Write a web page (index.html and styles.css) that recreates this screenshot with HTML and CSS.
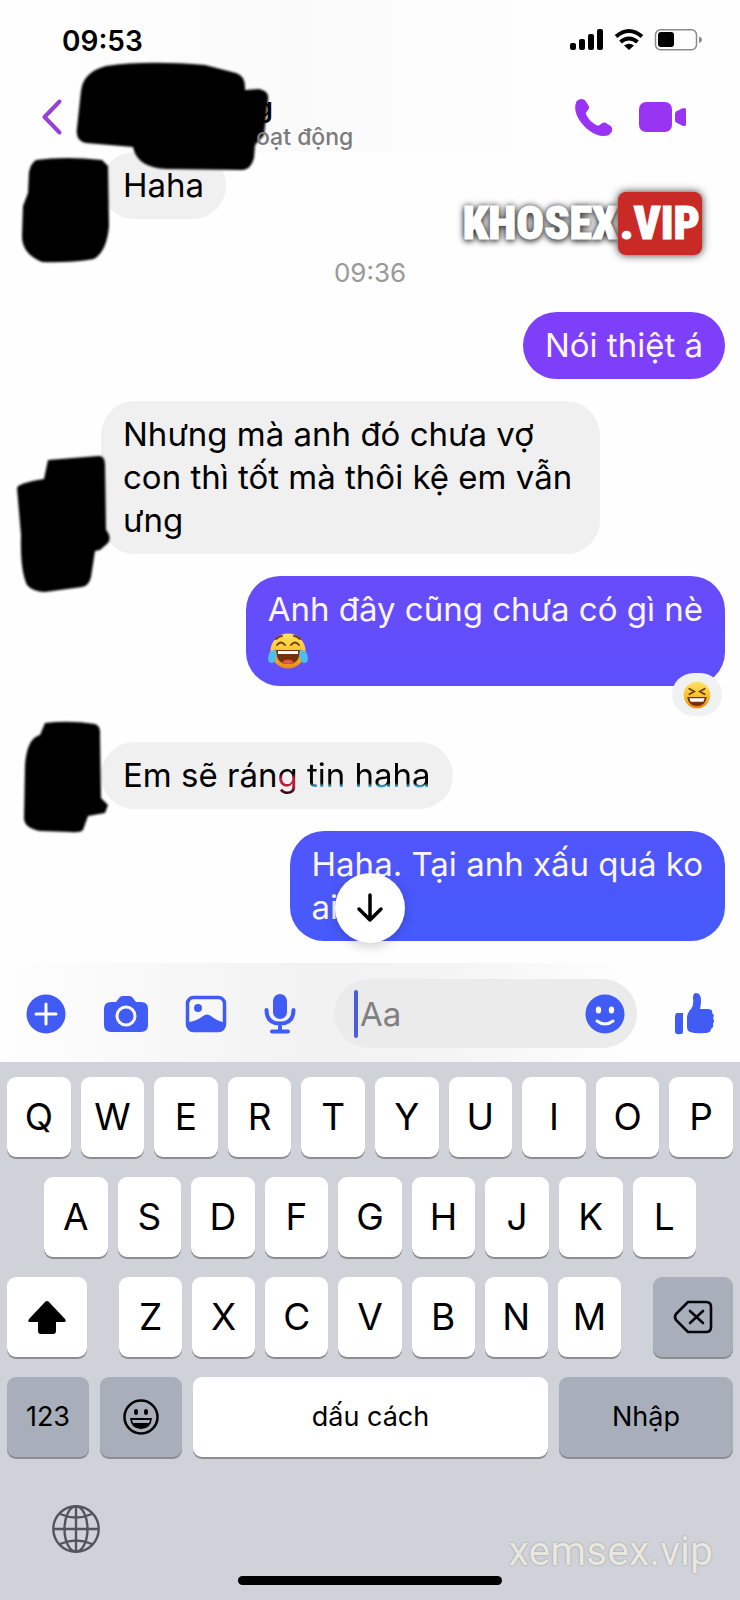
FILE: index.html
```html
<!DOCTYPE html>
<html lang="vi">
<head>
<meta charset="utf-8">
<meta name="viewport" content="width=device-width, initial-scale=1">
<title>Messenger</title>
<link rel="stylesheet" href="styles.css">
</head>
<body>
<div class="phone">
  <div class="top">
    <div class="status">
      <time class="clock">09:53</time>
      <svg class="status-icons" viewBox="0 0 132 22" width="132" height="22" aria-hidden="true">
        <rect x="0" y="14" width="6" height="7" rx="2"/><rect x="9" y="10" width="6" height="11" rx="2"/><rect x="18" y="5" width="6" height="16" rx="2"/><rect x="27" y="0" width="6" height="21" rx="2"/>
        <g fill="none" stroke="#000" stroke-width="4"><path d="M46 7.500Q59-3.500 72 7.500"/><path d="M50.500 13Q59 6 67.500 13"/></g>
        <path d="M54 16.500q5-3.500 10 0l-5 4.500z"/>
        <rect x="85.500" y="0.700" width="41" height="20" rx="5" fill="none" stroke="#8a8a8a" stroke-width="1.500"/><rect x="88" y="3" width="16" height="15" rx="3"/><path d="M129 7.500q3 1 3 3.300t-3 3.200z" fill="#888"/>
      </svg>
    </div>
    <header class="header">
      <button class="icon-btn back" aria-label="Quay lại"><svg viewBox="0 0 20 36" width="20" height="36"><path d="M17.500 2.500L2.500 18l15 15.500" fill="none" stroke="#9540d6" stroke-width="4" stroke-linecap="round" stroke-linejoin="round"/></svg></button>
      <div class="who"><strong>g</strong><span>oạt động</span></div>
      <button class="icon-btn" aria-label="Gọi"><svg viewBox="618 294 116 118" width="38" height="39"><path fill="#9a34f5" d="M622 305C630 294 645 294 651 304L660 318C664 327 654 332 651 341C657 357 670 371 688 378C697 377 700 365 711 369L728 380C736 389 730 402 719 408C700 412 680 408 660 392C635 372 615 343 619 315Z"/></svg></button>
      <button class="icon-btn video" aria-label="Gọi video"><svg viewBox="0 0 47 30" width="47" height="30"><g fill="#9a34f5"><rect width="33" height="30" rx="7"/><path d="M36 12q0-1.500 1-2.500l6-3q4-1.500 4 1v15q0 2.500-4 1l-6-3q-1-1-1-2.500z"/></g></svg></button>
      <svg class="scribble name-mask" viewBox="0 0 200 116" width="200" height="116" aria-hidden="true"><path d="M35 6Q75 0 134 5L165 13Q175 16 174 30L188 29Q199 31 197 40L193 75L184 85L183 98Q180 109 172 110L96 109Q66 108 62 87L15 83Q4 81 6 68L10 31Q12 12 35 6Z"/></svg>
    </header>
  </div>

  <main class="chat">
    <div class="row">
      <div class="avatar"><svg class="scribble" viewBox="0 0 101 120" width="101" height="120"><path transform="translate(0 4)" d="M36 4Q65 0 102 4L108 10L109 70Q107 95 94 103Q70 107 42 106Q22 98 22 80L23 50L28 37L29 16Q31 7 36 4Z"/></svg></div>
      <p class="bubble">Haha</p>
    </div>
    <time class="stamp">09:36</time>
    <div class="row mine"><p class="bubble violet">Nói thiệt á</p></div>
    <div class="row">
      <div class="avatar"><svg class="scribble" viewBox="0 0 101 153" width="101" height="153"><path transform="translate(0 54)" d="M48 5L98 1Q105 0 105 10L106 75Q112 82 108 88L100 95L95 96L91 122Q89 131 82 132L45 137Q33 137 27 130Q20 115 21 80L17 33Q18 28 44 24Z"/></svg></div>
      <p class="bubble">Nhưng mà anh đó chưa vợ con thì tốt mà thôi kệ em vẫn ưng</p>
    </div>
    <div class="row mine">
      <div class="bubble indigo">Anh đây cũng chưa có gì nè<br><svg class="emoji" viewBox="0 0 40 40" width="40" height="40" role="img" aria-label="Cười ra nước mắt"><circle cx="20" cy="20" r="17.500" fill="url(#face)"/><path d="M9 14q4-5 8 0M23 14q4-5 8 0M8 8q3-3 6-3M26 5q3 0 6 3" fill="none" stroke="#72400b" stroke-width="2" stroke-linecap="round"/><path d="M8 19h24q0 14-12 14T8 19z" fill="#73320b"/><path d="M10 20h20v3H10z" fill="#fff"/><path d="M14 31q6-5 12 0-6 4-12 0z" fill="#e65750"/><path d="M8 18q-8 2-8 10 0 4 4 4 6-1 4-14zM32 18q8 2 8 10 0 4-4 4-6-1-4-14z" fill="#51bde8"/></svg>
        <span class="reaction"><svg viewBox="0 0 40 40" width="28" height="28" role="img" aria-label="Haha"><defs><linearGradient id="face" x2="0" y2="1"><stop stop-color="#ffe35e"/><stop offset=".6" stop-color="#f8bd27"/><stop offset="1" stop-color="#e98718"/></linearGradient></defs><circle cx="20" cy="20" r="19" fill="url(#face)"/><path d="M9 11l7 4-7 4M31 11l-7 4 7 4" fill="none" stroke="#6b3c0b" stroke-width="2.500" stroke-linecap="round"/><path d="M6 23h28q-2 13-14 13T6 23z" fill="#73320b"/><path d="M9 24.500h22l-2 5H11z" fill="#fff"/></svg></span>
      </div>
    </div>
    <div class="row after-reaction">
      <div class="avatar"><svg class="scribble" viewBox="0 0 101 100" width="101" height="100"><path transform="translate(0 -22)" d="M45 3Q70 0 95 4Q101 6 100 15L101 78L108 85L105 93L88 96L83 110Q80 113 70 112L40 111Q24 108 24 98L25 45Q27 18 40 15Z"/></svg></div>
      <p class="bubble">Em sẽ rán<span class="tint-red">g</span> <span class="tint-blue">tin haha</span></p>
    </div>
    <div class="row mine"><p class="bubble blue">Haha. Tại anh xấu quá ko<br>ai</p></div>
    <button class="to-end" aria-label="Xuống cuối"><svg viewBox="0 0 28 30" width="28" height="30"><path d="M14 2v25M3 16l11 11 11-11" fill="none" stroke="#000" stroke-width="3.500" stroke-linecap="round" stroke-linejoin="round"/></svg></button>
    <div class="brand"><span>KHOSEX</span><b>.VIP</b></div>
  </main>

  <form class="composer">
    <button type="button" class="icon-btn" aria-label="Thêm"><svg viewBox="0 0 40 40" width="40" height="40"><circle cx="20" cy="20" r="19.500" fill="#415cf4"/><path d="M20 10v20M10 20h20" stroke="#fff" stroke-width="3" stroke-linecap="round"/></svg></button>
    <button type="button" class="icon-btn" aria-label="Máy ảnh"><svg viewBox="0 0 44 36" width="44" height="36"><path fill="#415cf4" d="M7 6h5l4-5q1-1 3-1h6q2 0 3 1l4 5h5q7 0 7 7v16q0 7-7 7H7q-7 0-7-7V13q0-7 7-7z"/><circle cx="22" cy="20" r="9" fill="#415cf4" stroke="#f7f7f7" stroke-width="3"/></svg></button>
    <button type="button" class="icon-btn" aria-label="Ảnh"><svg viewBox="0 0 40 36" width="40" height="36"><rect x="1.500" y="1.500" width="37" height="33" rx="6" fill="#f7f7f7" stroke="#415cf4" stroke-width="3.500"/><circle cx="12" cy="12" r="4" fill="#415cf4"/><path d="M3 26q8-1 14-6 4-3 8 0 6 5 12 6v4q0 4-5 4H8q-5 0-5-4z" fill="#415cf4"/></svg></button>
    <button type="button" class="icon-btn" aria-label="Ghi âm"><svg viewBox="0 0 32 40" width="32" height="40"><rect x="9" y="0" width="14" height="25" rx="7" fill="#415cf4"/><path d="M2.500 16q0 13.500 13.500 13.500T29.500 16M16 30v7M8 37.500h16" fill="none" stroke="#415cf4" stroke-width="4" stroke-linecap="round"/></svg></button>
    <div class="field">
      <span class="caret"></span>
      <input type="text" placeholder="Aa" aria-label="Tin nhắn">
      <button type="button" class="icon-btn" aria-label="Biểu tượng cảm xúc"><svg viewBox="0 0 40 40" width="40" height="40"><circle cx="20" cy="20" r="19.500" fill="#415cf4"/><g fill="#fff"><ellipse cx="13.500" cy="16" rx="2.700" ry="3.500"/><ellipse cx="26.500" cy="16" rx="2.700" ry="3.500"/></g><path d="M12 27q8 6 16 0" fill="none" stroke="#fff" stroke-width="3" stroke-linecap="round"/></svg></button>
    </div>
    <button type="button" class="icon-btn" aria-label="Thích"><svg viewBox="0 0 40 42" width="40" height="42"><g fill="#415cf4"><path d="M2 20h6v19q0 2-3 2-5 1-5-3V25q0-5 2-5z"/><path d="M12 25q0-5 4-9 3-4 2-11 0-5 3-5 5 0 5 8 0 4-1 8h8q5 0 4 4 3 2 1 5 2 3 0 6 1 3-2 5 0 4-6 4-9 1-15-1-3-1-3-5z"/></g></svg></button>
  </form>

  <section class="keyboard" aria-label="Bàn phím">
    <div class="keys"><button>Q</button><button>W</button><button>E</button><button>R</button><button>T</button><button>Y</button><button>U</button><button>I</button><button>O</button><button>P</button></div>
    <div class="keys second"><button>A</button><button>S</button><button>D</button><button>F</button><button>G</button><button>H</button><button>J</button><button>K</button><button>L</button></div>
    <div class="keys third">
      <button class="side" aria-label="Shift"><svg viewBox="0 0 38 33" width="38" height="33"><path d="M17 1q2-2 4 0l16 17q2 3-1 3h-8v9q0 3-3 3H13q-3 0-3-3v-9H2q-3 0-1-3z"/></svg></button>
      <div class="keys letters"><button>Z</button><button>X</button><button>C</button><button>V</button><button>B</button><button>N</button><button>M</button></div>
      <button class="side gray" aria-label="Xóa"><svg viewBox="0 0 40 34" width="40" height="34"><path d="M15 2h18q5 0 5 5v20q0 5-5 5H15L3 20q-2-3 0-6zM17 11l13 12M30 11L17 23" fill="none" stroke="#05070c" stroke-width="2.600" stroke-linecap="round" stroke-linejoin="round"/></svg></button>
    </div>
    <div class="keys fourth">
      <button class="small gray">123</button>
      <button class="small gray" aria-label="Emoji"><svg viewBox="0 0 36 36" width="36" height="36"><circle cx="18" cy="18" r="16.500" fill="none" stroke="#000" stroke-width="2.500"/><ellipse cx="13" cy="13" rx="2" ry="3"/><ellipse cx="23" cy="13" rx="2" ry="3"/><path d="M7 19h22q-1 11-11 11T7 19z"/><path d="M9 21h18l-1 3H10z" fill="#a8afba"/></svg></button>
      <button class="space">dấu cách</button>
      <button class="enter gray">Nhập</button>
    </div>
    <div class="dock">
      <button class="icon-btn" aria-label="Ngôn ngữ"><svg viewBox="0 0 48 48" width="48" height="48"><g fill="none" stroke="#51565e" stroke-width="2.400"><circle cx="24" cy="24" r="22.700"/><ellipse cx="24" cy="24" rx="11.500" ry="22.700"/><path d="M24 1v46M1 24h46M8 9q16 7 32 0M8 39q16-7 32 0"/></g></svg></button>
      <span class="watermark">xemsex.vip</span>
    </div>
    <div class="home"></div>
  </section>
</div>
</body>
</html>
```
FILE: styles.css
```css
* { box-sizing: border-box; }
body { margin: 0; background: #fefefe; color: #000; font-family: Inter, "Noto Sans", sans-serif; }
button, input { font: inherit; color: inherit; border: 0; padding: 0; margin: 0; background: none; }
p { margin: 0; }
svg { display: block; flex: none; overflow: visible; }
.phone { display: flex; flex-direction: column; min-height: 100vh; }
.icon-btn { display: flex; align-items: center; justify-content: center; flex: none; }

.top { position: relative; z-index: 2; background: linear-gradient(90deg, #fefefe 5%, #fafafa 40%, #fefefe 75%); }
.status { height: 72px; padding: 10px 38px 0 62px; display: flex; align-items: center; justify-content: space-between; }
.clock { font-size: 28px; line-height: 32px; font-weight: 600; }
.status-icons { margin-top: -2px; }
.header { position: relative; height: 80px; padding: 10px 54px 0 42px; display: flex; align-items: center; gap: 26px; }
.who { position: relative; z-index: 2; flex: 1; padding: 10px 0 0 168px; display: flex; flex-direction: column; }
.who strong { font-size: 27px; line-height: 30px; font-weight: 600; }
.who span { color: #7b7b7b; font-size: 23px; line-height: 28px; font-weight: 500; }
.scribble { position: absolute; filter: blur(1px); }
.name-mask { left: 71px; top: -12px; z-index: 1; }

.chat { position: relative; display: flex; flex-direction: column; gap: 22px; padding: 0 15px 22px 0; font-size: 33px; line-height: 43px; }
.row { display: flex; }
.mine { justify-content: flex-end; }
.avatar { position: relative; z-index: 1; flex: none; width: 101px; }
.bubble { position: relative; max-width: 499px; padding: 12px 22px; border-radius: 34px; background: #f0f0f0; }
.mine .bubble { color: #fbf5ff; }
.mine .violet { background: #7e3ffb; }
.mine .indigo { background: linear-gradient(#684bfb, #5d50fc); }
.mine .blue { background: linear-gradient(#5055fb, #465bfc); }
.stamp { align-self: center; padding: 15px 0 0 15px; font-size: 26px; line-height: 34px; color: #999; }
.emoji { display: inline-block; vertical-align: top; }
.reaction { position: absolute; right: 3px; bottom: -30px; width: 50px; height: 43px; border-radius: 22px; background: #f0f1f3; display: flex; align-items: center; justify-content: center; }
.after-reaction { margin-top: 34px; }
.tint-red, .tint-blue { color: transparent; background-clip: text; -webkit-background-clip: text; }
.tint-red { background-image: linear-gradient(#000 45%, #c91f43 60%, #b01836 80%, #000); }
.tint-blue { background-image: linear-gradient(#000 70%, #37a7c4 78%); }
.to-end { position: absolute; left: 50%; bottom: 20px; width: 70px; height: 70px; margin-left: -35px; border-radius: 50%; background: #fff; box-shadow: 0 3px 12px #0003; display: flex; align-items: center; justify-content: center; }
.brand { position: absolute; right: 38px; top: 40px; display: flex; align-items: center; color: #fff; font: 900 46px/63px "Roboto Condensed", "Liberation Sans Narrow", "Liberation Sans", sans-serif; -webkit-text-stroke: 1px #fff; text-shadow: 0 0 7px #333, 0 2px 6px #444; }
.brand b { padding: 0 2px; border-radius: 8px; background: #c92a25; box-shadow: 0 0 8px #333; text-shadow: none; }

.composer { display: flex; align-items: center; justify-content: space-between; padding: 16px 25px 14px 26px; background: linear-gradient(90deg, #fefefe, #f2f2f2 42%, #f4f4f4 60%, #fefefe 85%); }
.field { display: flex; align-items: center; width: 44%; height: 69px; padding: 0 12px 0 20px; border-radius: 35px; background: #ebebeb; }
.caret { flex: none; width: 4px; height: 48px; border-radius: 2px; background: #4a5ce0; }
.field input { flex: 1; min-width: 0; height: 48px; padding-left: 2px; font-size: 33px; outline: 0; }
.field input::placeholder { color: #808080; opacity: 1; }

.keyboard { flex: 1; display: flex; flex-direction: column; gap: 20px; padding: 15px 7px 10px; background: #cfd3d9; }
.keys { display: flex; gap: 10px; }
.keys button { flex: 1 1 0; min-width: 0; height: 80px; border-radius: 9px; background: #fff; box-shadow: 0 2px 0 #8b8d91; font-size: 37px; line-height: 44px; display: flex; align-items: center; justify-content: center; }
.keys .gray { background: #a8afba; }
.second { padding: 0 37px; }
.third { gap: 32px; }
.third .side { flex-grow: 80; }
.letters { flex: 502 1 0; min-width: 0; }
.fourth { gap: 11px; }
.keys .small { flex-grow: 82; font-size: 27px; }
.keys .space { flex-grow: 355; font-size: 27px; }
.keys .enter { flex-grow: 174; font-size: 27px; }
.dock { display: flex; align-items: center; justify-content: space-between; padding: 6px 20px 0 45px; }
.watermark { padding-top: 44px; color: #e9e7df; font: 41px/48px Roboto, sans-serif; text-shadow: 0 0 2px #888; }
.home { align-self: center; width: 264px; height: 9px; margin-top: -19px; border-radius: 5px; background: #000; }
```
